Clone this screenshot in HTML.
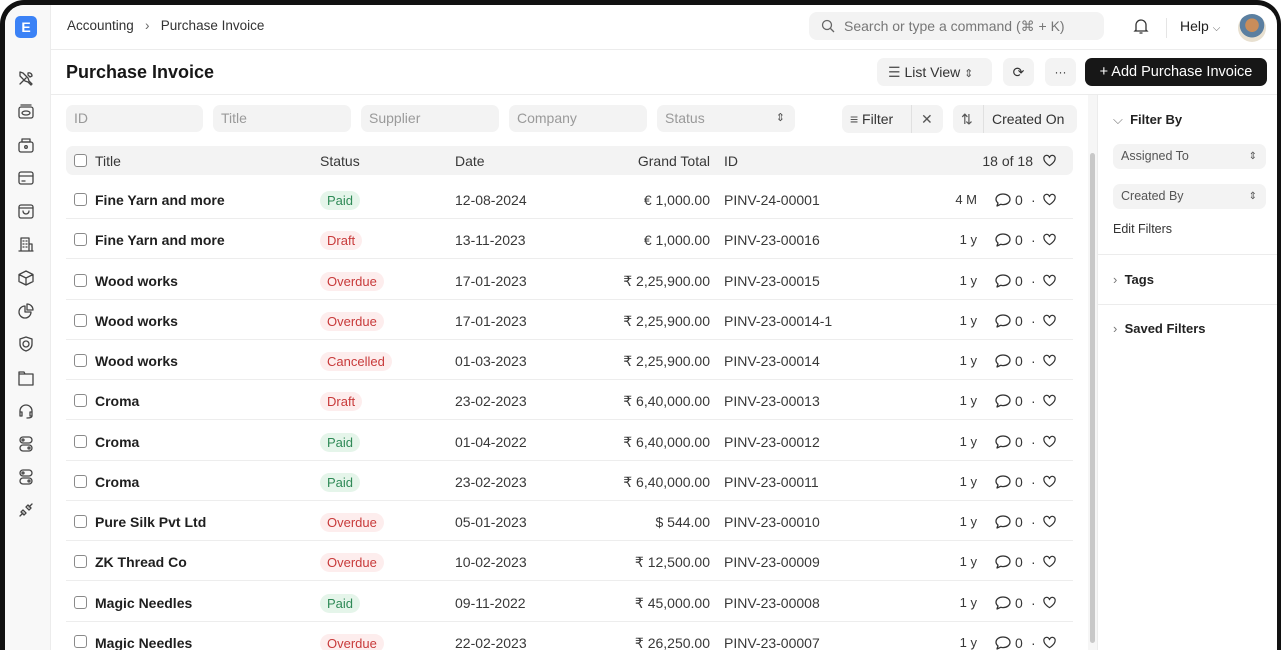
<!DOCTYPE html>
<html><head><meta charset="utf-8"><style>
*{box-sizing:border-box;margin:0;padding:0}
html,body{width:1281px;height:650px;overflow:hidden}
body{background:#fff;font-family:"Liberation Sans",sans-serif;color:#383838;font-size:14px;position:relative}
.frame{position:absolute;left:0;top:0;width:1281px;height:650px;border:5px solid #111;border-right-width:4px;border-bottom:0;border-radius:24px 24px 0 0;overflow:hidden;background:#fff}
.abs{position:absolute}
.side{left:0;top:0;width:46px;height:645px;background:#f8f8f8;border-right:1px solid #ececec}
.ic{position:absolute;left:12px;width:18px;height:18px}
.ic svg{width:18px;height:18px;fill:none;stroke:#444;stroke-width:1.3;stroke-linecap:round;stroke-linejoin:round}
.inp{background:#f3f3f3;border-radius:7px;height:27px;color:#9a9a9a;font-size:14px;line-height:27px;padding-left:8px}
.btn{background:#f3f3f3;border-radius:7px;height:28px;line-height:28px;color:#333;font-size:14px}
.row{position:absolute;left:61px;width:1007px;height:40px;border-bottom:1px solid #ededed}
.row span{position:absolute;top:13px;line-height:16px}
.cb{position:absolute;left:8px;top:14px;width:13px;height:13px;border:1px solid #8a8a8a;border-radius:3px}
.t{left:29px;font-weight:bold;color:#1f1f1f}
.b{left:254px;top:12px!important;height:19px;line-height:19px!important;padding:0 7px;border-radius:10px;font-size:13px}
.paid{background:#e5f5ea;color:#2f8a57}
.red{background:#fdeded;color:#c83a3a}
.d{left:389px}
.g{right:363px}
.id{left:658px}
.tm{right:96px;font-size:13px}
.cm{left:928px;top:12px!important}
.z{left:949px}
.dt{left:965px}
.ht{left:976px;top:13px!important}
.hdr span{position:absolute;top:7px}
</style></head><body>
<svg width="0" height="0" style="position:absolute"><defs>
<symbol id="bub" viewBox="0 0 18 18"><path d="M9 3c4 0 7 2.3 7 5.3S13 13.6 9 13.6c-.8 0-1.6-.1-2.3-.3L3 15l1-3C2.8 11 2 9.7 2 8.3 2 5.3 5 3 9 3z" fill="none" stroke="#333" stroke-width="1.3" stroke-linejoin="round"/></symbol>
<symbol id="hrt" viewBox="0 0 16 16"><path d="M8 13.5S2 10 2 6a3 3 0 0 1 6-1 3 3 0 0 1 6 1c0 4-6 7.5-6 7.5z" fill="none" stroke="#333" stroke-width="1.3" stroke-linejoin="round"/></symbol>
</defs></svg>
<div class="frame">
<div class="abs side">
 <div class="abs" style="left:10px;top:11px;width:22px;height:22px;background:#3b82f6;border-radius:5px;color:#fff;font-weight:bold;font-size:14px;text-align:center;line-height:22px">E</div>
 <div class="ic" style="top:64px"><svg viewBox="0 0 18 18"><path d="M3 15l6-6M11 4a3 3 0 0 1 4 3l-2 1-2-2zM3 3l3 1 5 5 1 3 3 3-1 1-3-3-3-1-5-5z"/></svg></div>
 <div class="ic" style="top:98px"><svg viewBox="0 0 18 18"><rect x="2" y="4" width="14" height="11" rx="2"/><ellipse cx="9" cy="10" rx="4" ry="2"/><path d="M4 2h10"/></svg></div>
 <div class="ic" style="top:131px"><svg viewBox="0 0 18 18"><rect x="2" y="6" width="14" height="10" rx="2"/><circle cx="9" cy="11" r="1.3"/><path d="M5 3h8v3H5z"/></svg></div>
 <div class="ic" style="top:164px"><svg viewBox="0 0 18 18"><rect x="2" y="3" width="14" height="12" rx="2"/><path d="M2 7h14M5 12h3"/></svg></div>
 <div class="ic" style="top:197px"><svg viewBox="0 0 18 18"><rect x="2" y="3" width="14" height="13" rx="2"/><path d="M2 6h14M6 9a3 3 0 0 0 6 0"/></svg></div>
 <div class="ic" style="top:230px"><svg viewBox="0 0 18 18"><path d="M4 16V3h8v13M2 16h14M6 6h1M9 6h1M6 9h1M9 9h1M6 12h1M9 12h1M12 9h3v7"/></svg></div>
 <div class="ic" style="top:264px"><svg viewBox="0 0 18 18"><path d="M9 2l7 3.5v7L9 16l-7-3.5v-7zM2 5.5L9 9l7-3.5M9 9v7"/></svg></div>
 <div class="ic" style="top:297px"><svg viewBox="0 0 18 18"><path d="M8 4a6 6 0 1 0 6 6H8zM10 2a6 6 0 0 1 6 6h-6z"/></svg></div>
 <div class="ic" style="top:330px"><svg viewBox="0 0 18 18"><path d="M9 2l6 2v5c0 4-3 6-6 7-3-1-6-3-6-7V4z"/><circle cx="9" cy="9" r="3"/></svg></div>
 <div class="ic" style="top:364px"><svg viewBox="0 0 18 18"><path d="M2 5h14v11H2zM2 5V3h5l1 2"/></svg></div>
 <div class="ic" style="top:397px"><svg viewBox="0 0 18 18"><path d="M3 12V9a6 6 0 0 1 12 0v3M3 10h2v4H3zM13 10h2v4h-2zM15 14c0 2-3 2-5 2"/></svg></div>
 <div class="ic" style="top:430px"><svg viewBox="0 0 18 18"><rect x="3" y="2" width="12" height="6" rx="3"/><rect x="3" y="10" width="12" height="6" rx="3"/><circle cx="6" cy="5" r="1"/><circle cx="12" cy="13" r="1"/></svg></div>
 <div class="ic" style="top:463px"><svg viewBox="0 0 18 18"><rect x="3" y="2" width="12" height="6" rx="3"/><rect x="3" y="10" width="12" height="6" rx="3"/><circle cx="6" cy="5" r="1"/><circle cx="12" cy="13" r="1"/></svg></div>
 <div class="ic" style="top:496px"><svg viewBox="0 0 18 18"><path d="M3 15l3-3M12 6l3-3M6 9l3 3-2 2-3-3zM9 6l3 3 2-2-3-3z"/></svg></div>
</div>

<div class="abs" style="left:46px;top:0;width:1226px;height:45px;border-bottom:1px solid #ececec"></div>
<div class="abs" style="left:62px;top:13px;font-size:13.5px;color:#333">Accounting &nbsp;&nbsp;<span style="color:#666">›</span>&nbsp;&nbsp; Purchase Invoice</div>
<div class="abs" style="left:804px;top:7px;width:295px;height:28px;background:#f3f3f3;border-radius:8px;color:#777;font-size:14px;line-height:28px;padding-left:35px">Search or type a command (⌘ + K)
 <svg class="abs" style="left:12px;top:7px" width="14" height="14" viewBox="0 0 14 14" fill="none" stroke="#666" stroke-width="1.3"><circle cx="6" cy="6" r="4.5"/><path d="M9.5 9.5L13 13"/></svg></div>
<svg class="abs" style="left:1128px;top:12px" width="16" height="18" viewBox="0 0 16 18" fill="none" stroke="#333" stroke-width="1.3"><path d="M3 13V8a5 5 0 0 1 10 0v5l1 1H2zM6.5 16h3"/></svg>
<div class="abs" style="left:1161px;top:13px;width:1px;height:20px;background:#e5e5e5"></div>
<div class="abs" style="left:1175px;top:13px;font-size:14px;color:#222">Help <span style="font-size:10px;color:#666">⌵</span></div>
<div class="abs" style="left:1233px;top:9px;width:28px;height:28px;border-radius:50%;background:radial-gradient(circle at 50% 40%,#c98d5a 0 30%,#5b7fa0 32% 55%,#e8e0d0 57%)"></div>

<div class="abs" style="left:46px;top:89px;width:1226px;height:1px;background:#ececec"></div>
<div class="abs" style="left:61px;top:57px;font-size:18px;font-weight:bold;color:#171717">Purchase Invoice</div>
<div class="abs btn" style="left:872px;top:53px;width:115px;padding-left:11px"><span style="color:#555">☰</span> List View <span style="font-size:11px;color:#555">⇕</span></div>
<div class="abs btn" style="left:998px;top:53px;width:31px;text-align:center">⟳</div>
<div class="abs btn" style="left:1040px;top:53px;width:31px;text-align:center;font-size:12px">···</div>
<div class="abs btn" style="left:1080px;top:53px;width:182px;background:#171717;color:#fff;text-align:center;font-size:14.5px">+ Add Purchase Invoice</div>

<div class="abs inp" style="left:61px;top:100px;width:137px">ID</div>
<div class="abs inp" style="left:208px;top:100px;width:138px">Title</div>
<div class="abs inp" style="left:356px;top:100px;width:138px">Supplier</div>
<div class="abs inp" style="left:504px;top:100px;width:138px">Company</div>
<div class="abs inp" style="left:652px;top:100px;width:138px">Status<span class="abs" style="right:10px;font-size:11px;color:#555">⇕</span></div>
<div class="abs btn" style="left:837px;top:100px;width:101px;padding-left:8px"><span style="color:#555">≡</span> Filter<span class="abs" style="left:69px;top:0;width:1px;height:28px;background:#e0e0e0"></span><span class="abs" style="left:79px;color:#555">✕</span></div>
<div class="abs btn" style="left:948px;top:100px;width:124px;padding-left:8px"><span style="color:#555">⇅</span><span class="abs" style="left:30px;top:0;width:1px;height:28px;background:#e0e0e0"></span><span class="abs" style="left:39px">Created On</span></div>

<div class="abs hdr" style="left:61px;top:141px;width:1007px;height:29px;background:#f3f3f3;border-radius:7px">
 <div class="cb" style="top:8px;background:#fff"></div>
 <span style="left:29px">Title</span><span style="left:254px">Status</span><span style="left:389px">Date</span><span style="right:363px">Grand Total</span><span style="left:658px">ID</span><span style="right:40px">18 of 18</span><svg class="abs" style="left:976px;top:7px" width="15" height="15"><use href="#hrt"/></svg>
</div>

<div class="row" style="top:174px"><div class="cb"></div><span class="t">Fine Yarn and more</span><span class="b paid">Paid</span><span class="d">12-08-2024</span><span class="g">€ 1,000.00</span><span class="id">PINV-24-00001</span><span class="tm">4 M</span><span class="cm"><svg width="18" height="18"><use href="#bub"/></svg></span><span class="z">0</span><span class="dt">·</span><span class="ht"><svg width="15" height="15"><use href="#hrt"/></svg></span></div>
<div class="row" style="top:214.25px"><div class="cb"></div><span class="t">Fine Yarn and more</span><span class="b red">Draft</span><span class="d">13-11-2023</span><span class="g">€ 1,000.00</span><span class="id">PINV-23-00016</span><span class="tm">1 y</span><span class="cm"><svg width="18" height="18"><use href="#bub"/></svg></span><span class="z">0</span><span class="dt">·</span><span class="ht"><svg width="15" height="15"><use href="#hrt"/></svg></span></div>
<div class="row" style="top:254.5px"><div class="cb"></div><span class="t">Wood works</span><span class="b red">Overdue</span><span class="d">17-01-2023</span><span class="g">₹ 2,25,900.00</span><span class="id">PINV-23-00015</span><span class="tm">1 y</span><span class="cm"><svg width="18" height="18"><use href="#bub"/></svg></span><span class="z">0</span><span class="dt">·</span><span class="ht"><svg width="15" height="15"><use href="#hrt"/></svg></span></div>
<div class="row" style="top:294.75px"><div class="cb"></div><span class="t">Wood works</span><span class="b red">Overdue</span><span class="d">17-01-2023</span><span class="g">₹ 2,25,900.00</span><span class="id">PINV-23-00014-1</span><span class="tm">1 y</span><span class="cm"><svg width="18" height="18"><use href="#bub"/></svg></span><span class="z">0</span><span class="dt">·</span><span class="ht"><svg width="15" height="15"><use href="#hrt"/></svg></span></div>
<div class="row" style="top:335px"><div class="cb"></div><span class="t">Wood works</span><span class="b red">Cancelled</span><span class="d">01-03-2023</span><span class="g">₹ 2,25,900.00</span><span class="id">PINV-23-00014</span><span class="tm">1 y</span><span class="cm"><svg width="18" height="18"><use href="#bub"/></svg></span><span class="z">0</span><span class="dt">·</span><span class="ht"><svg width="15" height="15"><use href="#hrt"/></svg></span></div>
<div class="row" style="top:375.25px"><div class="cb"></div><span class="t">Croma</span><span class="b red">Draft</span><span class="d">23-02-2023</span><span class="g">₹ 6,40,000.00</span><span class="id">PINV-23-00013</span><span class="tm">1 y</span><span class="cm"><svg width="18" height="18"><use href="#bub"/></svg></span><span class="z">0</span><span class="dt">·</span><span class="ht"><svg width="15" height="15"><use href="#hrt"/></svg></span></div>
<div class="row" style="top:415.5px"><div class="cb"></div><span class="t">Croma</span><span class="b paid">Paid</span><span class="d">01-04-2022</span><span class="g">₹ 6,40,000.00</span><span class="id">PINV-23-00012</span><span class="tm">1 y</span><span class="cm"><svg width="18" height="18"><use href="#bub"/></svg></span><span class="z">0</span><span class="dt">·</span><span class="ht"><svg width="15" height="15"><use href="#hrt"/></svg></span></div>
<div class="row" style="top:455.75px"><div class="cb"></div><span class="t">Croma</span><span class="b paid">Paid</span><span class="d">23-02-2023</span><span class="g">₹ 6,40,000.00</span><span class="id">PINV-23-00011</span><span class="tm">1 y</span><span class="cm"><svg width="18" height="18"><use href="#bub"/></svg></span><span class="z">0</span><span class="dt">·</span><span class="ht"><svg width="15" height="15"><use href="#hrt"/></svg></span></div>
<div class="row" style="top:496px"><div class="cb"></div><span class="t">Pure Silk Pvt Ltd</span><span class="b red">Overdue</span><span class="d">05-01-2023</span><span class="g">$ 544.00</span><span class="id">PINV-23-00010</span><span class="tm">1 y</span><span class="cm"><svg width="18" height="18"><use href="#bub"/></svg></span><span class="z">0</span><span class="dt">·</span><span class="ht"><svg width="15" height="15"><use href="#hrt"/></svg></span></div>
<div class="row" style="top:536.25px"><div class="cb"></div><span class="t">ZK Thread Co</span><span class="b red">Overdue</span><span class="d">10-02-2023</span><span class="g">₹ 12,500.00</span><span class="id">PINV-23-00009</span><span class="tm">1 y</span><span class="cm"><svg width="18" height="18"><use href="#bub"/></svg></span><span class="z">0</span><span class="dt">·</span><span class="ht"><svg width="15" height="15"><use href="#hrt"/></svg></span></div>
<div class="row" style="top:576.5px"><div class="cb"></div><span class="t">Magic Needles</span><span class="b paid">Paid</span><span class="d">09-11-2022</span><span class="g">₹ 45,000.00</span><span class="id">PINV-23-00008</span><span class="tm">1 y</span><span class="cm"><svg width="18" height="18"><use href="#bub"/></svg></span><span class="z">0</span><span class="dt">·</span><span class="ht"><svg width="15" height="15"><use href="#hrt"/></svg></span></div>
<div class="row" style="top:605px;height:40px;border-bottom:0"><div class="cb" style="top:25px"></div><span class="t" style="top:25px">Magic Needles</span><span class="b red" style="top:24px!important">Overdue</span><span class="d" style="top:25px">22-02-2023</span><span class="g" style="top:25px">₹ 26,250.00</span><span class="id" style="top:25px">PINV-23-00007</span><span class="tm" style="top:25px">1 y</span><span class="cm" style="top:24px!important"><svg width="18" height="18"><use href="#bub"/></svg></span><span class="z" style="top:25px">0</span><span class="dt" style="top:25px">·</span><span class="ht" style="top:25px!important"><svg width="15" height="15"><use href="#hrt"/></svg></span></div>

<div class="abs" style="left:1083px;top:90px;width:9px;height:555px;background:#f6f6f6"></div>
<div class="abs" style="left:1085px;top:148px;width:5px;height:490px;background:#c8c8c8;border-radius:3px"></div>

<div class="abs" style="left:1092px;top:90px;width:1px;height:555px;background:#ececec"></div>
<div class="abs" style="left:1108px;top:107px;font-size:13px;font-weight:bold;color:#222"><span style="color:#777;font-weight:normal">⌵</span>&nbsp; Filter By</div>
<div class="abs inp" style="left:1108px;top:139px;width:153px;height:25px;line-height:25px;font-size:12.5px;color:#555">Assigned To<span class="abs" style="right:9px;font-size:10px">⇕</span></div>
<div class="abs inp" style="left:1108px;top:179px;width:153px;height:25px;line-height:25px;font-size:12.5px;color:#555">Created By<span class="abs" style="right:9px;font-size:10px">⇕</span></div>
<div class="abs" style="left:1108px;top:217px;font-size:12.5px;color:#333">Edit Filters</div>
<div class="abs" style="left:1093px;top:249px;width:179px;height:1px;background:#ececec"></div>
<div class="abs" style="left:1108px;top:267px;font-size:13px;font-weight:bold;color:#222"><span style="color:#777;font-weight:normal">›</span>&nbsp; Tags</div>
<div class="abs" style="left:1093px;top:299px;width:179px;height:1px;background:#ececec"></div>
<div class="abs" style="left:1108px;top:316px;font-size:13px;font-weight:bold;color:#222"><span style="color:#777;font-weight:normal">›</span>&nbsp; Saved Filters</div>
</div>
</body></html>
